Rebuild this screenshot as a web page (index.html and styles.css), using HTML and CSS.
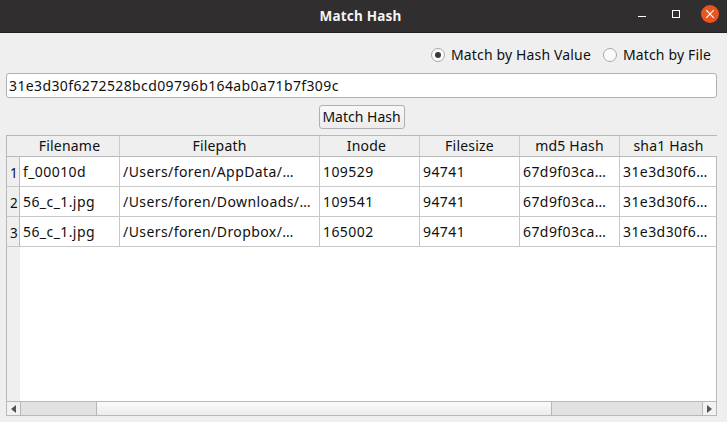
FILE: index.html
```html
<!DOCTYPE html>
<html lang="en">
<head>
<meta charset="utf-8">
<title>Match Hash</title>
<link rel="stylesheet" href="styles.css">
</head>
<body>
<div class="window">
  <header class="titlebar">
    <div class="title">Match Hash</div>
    <div class="controls">
      <svg class="ctl" width="12" height="12" viewBox="0 0 12 12"><path d="M2 8.5h8" stroke="#fff" stroke-width="1"/></svg>
      <svg class="ctl" width="12" height="12" viewBox="0 0 12 12"><rect x="2.5" y="2.5" width="7" height="7" fill="none" stroke="#fff" stroke-width="1"/></svg>
      <svg class="close" width="18" height="18" viewBox="0 0 18 18"><circle cx="9" cy="9" r="9" fill="#e95420"/><path d="M5.2 5.2l7.6 7.6M12.8 5.2l-7.6 7.6" stroke="#fff" stroke-width="1.2"/></svg>
    </div>
  </header>
  <main class="content">
    <div class="radios">
      <label class="radio"><span class="dot checked"></span>Match by Hash Value</label>
      <label class="radio"><span class="dot"></span>Match by File</label>
    </div>
    <div class="input">31e3d30f6272528bcd09796b164ab0a71b7f309c</div>
    <div class="btnrow"><button class="btn">Match Hash</button></div>
    <div class="table">
      <div class="grid">
        <div class="hc corner"></div>
        <div class="hc">Filename</div><div class="hc">Filepath</div><div class="hc inode">Inode</div><div class="hc">Filesize</div><div class="hc">md5 Hash</div><div class="hc last">sha1 Hash</div>

        <div class="rh">1</div>
        <div class="c">f_00010d</div><div class="c">/Users/foren/AppData/…</div><div class="c">109529</div><div class="c">94741</div><div class="c">67d9f03ca…</div><div class="c last">31e3d30f6…</div>

        <div class="rh">2</div>
        <div class="c">56_c_1.jpg</div><div class="c">/Users/foren/Downloads/…</div><div class="c">109541</div><div class="c">94741</div><div class="c">67d9f03ca…</div><div class="c last">31e3d30f6…</div>

        <div class="rh">3</div>
        <div class="c">56_c_1.jpg</div><div class="c">/Users/foren/Dropbox/…</div><div class="c">165002</div><div class="c">94741</div><div class="c">67d9f03ca…</div><div class="c last">31e3d30f6…</div>
      </div>
      <div class="rest"><div class="rest-head"></div></div>
      <div class="scrollbar">
        <div class="sb-btn left"><svg width="5" height="8" viewBox="0 0 5 8"><path d="M5 0v8L0 4z" fill="#555"/></svg></div>
        <div class="track t1"></div>
        <div class="thumb"></div>
        <div class="track t2"></div>
        <div class="sb-btn right"><svg width="5" height="8" viewBox="0 0 5 8"><path d="M0 0v8l5-4z" fill="#555"/></svg></div>
      </div>
    </div>
  </main>
</div>
</body>
</html>
```
FILE: styles.css
```css
* { box-sizing: border-box; }
html, body { margin: 0; padding: 0; }
body {
  width: 727px;
  height: 422px;
  overflow: hidden;
  background: #efefef;
  font-family: "Noto Sans", sans-serif;
  font-size: 14px;
  color: #101010;
}
.window { display: flex; flex-direction: column; height: 422px; }
.titlebar {
  height: 33px;
  flex: none;
  background: #302e2e;
  border-bottom: 1px solid #232222;
  position: relative;
  display: flex;
  align-items: center;
  justify-content: center;
  padding-right: 6px;
}
.title { color: #f4f4f4; font-weight: 700; font-size: 13.5px; line-height: 30px; letter-spacing: 0.2px; }
.controls {
  position: absolute;
  right: 8px;
  top: 5px;
  display: flex;
  align-items: center;
  gap: 22px;
}
.close { margin-left: -3px; }
.content { flex: 1; padding: 0 10px 6px 6px; display: flex; flex-direction: column; }
.radios {
  height: 40px;
  flex: none;
  display: flex;
  justify-content: flex-end;
  align-items: center;
  gap: 12px;
  padding-top: 4px;
  padding-right: 6px;
  letter-spacing: 0.15px;
}
.radio { display: flex; align-items: center; gap: 6px; line-height: 20px; }
.dot {
  width: 14px;
  height: 14px;
  border-radius: 50%;
  border: 1px solid #a9a9a9;
  background: #fbfbfb;
  display: flex;
  align-items: center;
  justify-content: center;
}
.dot.checked::after {
  content: "";
  width: 6px;
  height: 6px;
  border-radius: 50%;
  background: #3a3a3a;
}
.input {
  height: 25px;
  flex: none;
  background: #fff;
  border: 1px solid #b0b0b0;
  border-radius: 3px;
  padding: 0 2px;
  line-height: 23px;
  letter-spacing: 0.38px;
  white-space: nowrap;
}
.btnrow { display: flex; justify-content: center; padding-top: 7px; height: 37px; flex: none; }
.btn {
  width: 86px;
  height: 24px;
  padding: 0;
  font: inherit;
  color: inherit;
  background: linear-gradient(#f8f8f8, #ececec);
  border: 1px solid #b0b0b0;
  border-radius: 3px;
  line-height: 22px;
}
.table {
  flex: 1;
  display: flex;
  flex-direction: column;
  border: 1px solid #b8b8b8;
  background: #fff;
  min-height: 0;
}
.grid {
  display: grid;
  grid-template-columns: 13px 100px 200px 100px 100px 100px 97px;
  grid-template-rows: 21px 30px 30px 30px;
  flex: none;
}
.hc {
  background: #efefef;
  border-right: 1px solid #cbcbcb;
  border-bottom: 1px solid #b8b8b8;
  text-align: center;
  line-height: 20px;
  white-space: nowrap;
  letter-spacing: 0.2px;
}
.corner { border-right: none; }
.inode { padding-right: 6px; }
.rh {
  background: #efefef;
  border-right: 1px solid #b8b8b8;
  border-bottom: 1px solid #c8c8c8;
  line-height: 33px;
  padding-left: 3px;
  font-size: 13.5px;
}
.c {
  border-right: 1px solid #c8c8c8;
  border-bottom: 1px solid #c8c8c8;
  padding-left: 3px;
  line-height: 29px;
  white-space: nowrap;
  overflow: hidden;
  letter-spacing: 0.42px;
}
.last { border-right: none; }
.rest { flex: 1; min-height: 0; background: #fff; }
.rest-head { width: 13px; height: 100%; background: #efefef; }
.scrollbar {
  height: 14px;
  flex: none;
  display: flex;
  border-top: 1px solid #b8b8b8;
  background: #e2e2e2;
}
.sb-btn {
  flex: none;
  width: 14px;
  background: #f2f2f2;
  display: flex;
  align-items: center;
  justify-content: center;
}
.sb-btn.left { border-right: 1px solid #b8b8b8; }
.sb-btn.right { border-left: 1px solid #b8b8b8; }
.track { background: #e2e2e2; }
.t1 { width: 75px; }
.t2 { flex: 1; }
.thumb {
  width: 456px;
  background: linear-gradient(#fafafa, #ececec);
  border-left: 1px solid #b8b8b8;
  border-right: 1px solid #b8b8b8;
}
```
